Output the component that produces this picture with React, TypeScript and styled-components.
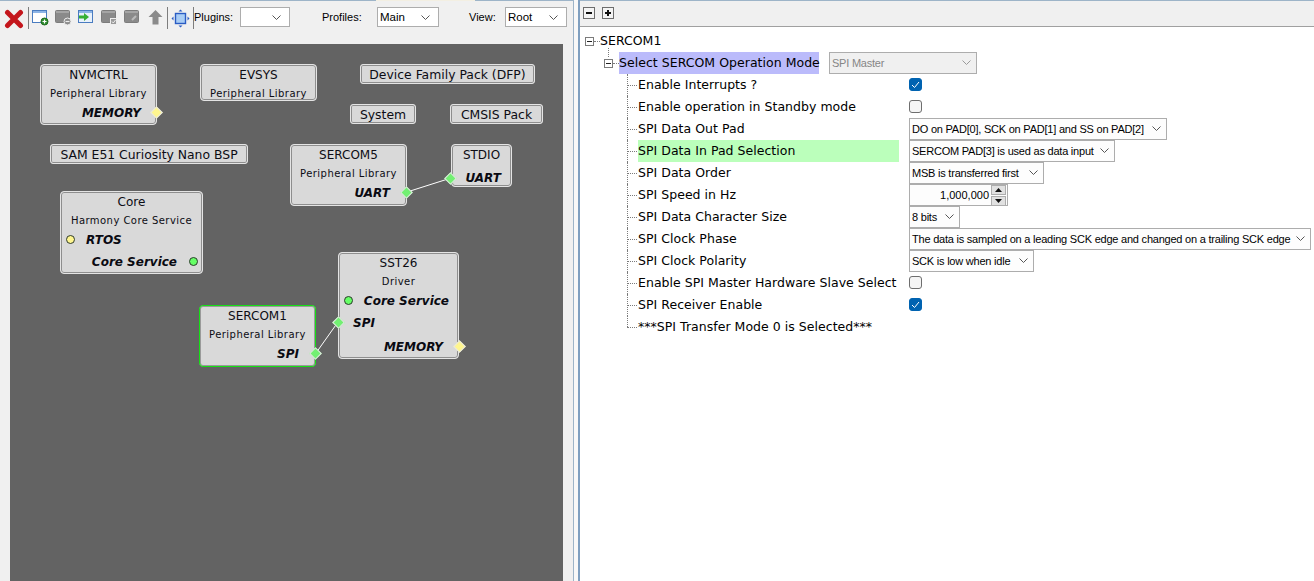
import React from 'react'
import styled, { createGlobalStyle } from 'styled-components'

const GlobalStyle = createGlobalStyle`
  html, body { margin: 0; padding: 0; height: 100%; background: #f0f0f0; overflow: hidden; }
  #root { height: 100%; }
`

const UI_FONT = `"Liberation Sans", Arial, sans-serif`
const TREE_FONT = `"DejaVu Sans", Verdana, sans-serif`

const Window = styled.div`
  width: 1314px;
  height: 581px;
  display: flex;
  font-family: ${UI_FONT};
  color: #000;
`

const LeftPane = styled.div`
  width: 573px;
  height: 581px;
  display: flex;
  flex-direction: column;
`

const TopLine = styled.div`
  height: 1px;
  flex: none;
  background: linear-gradient(
    to right,
    #9db4c8 0,
    #9db4c8 376px,
    #f3efe2 376px,
    #f3efe2 475px,
    #9db4c8 475px
  );
`

const Splitter = styled.div`
  width: 4px;
  border-left: 1px solid #9db4c8;
  border-right: 2px solid #7f9fc0;
  background: #f8f8f8;
`

const RightPane = styled.div`
  flex: 1;
  display: flex;
  flex-direction: column;
  background: #fff;
  border-top: 1px solid #9db4c8;
`

const Toolbar = styled.div`
  height: 35px;
  padding: 6px 0 0 4px;
  box-sizing: border-box;
  display: flex;
  align-items: flex-start;
`

const ToolIcon = styled.svg<{ $gap?: number }>`
  display: block;
  flex: none;
  margin-left: ${p => p.$gap ?? 0}px;
  margin-top: 2px;
`

const ToolSep = styled.div<{ $gap: number }>`
  width: 1px;
  height: 22px;
  background: #7d7d7d;
  margin-left: ${p => p.$gap}px;
  flex: none;
`

const ToolLabel = styled.span<{ $gap: number; $w: number }>`
  font-size: 11px;
  line-height: 20px;
  margin-left: ${p => p.$gap}px;
  width: ${p => p.$w}px;
  flex: none;
`

const ToolCombo = styled.div<{ $w: number; $gap: number }>`
  width: ${p => p.$w}px;
  height: 20px;
  margin-left: ${p => p.$gap}px;
  flex: none;
  box-sizing: border-box;
  border: 1px solid #adadad;
  background: #fff;
  font-size: 11.5px;
  line-height: 18px;
  padding: 0 8px 0 2px;
  display: flex;
  align-items: center;
  justify-content: space-between;
`

const Canvas = styled.div`
  position: relative;
  margin: 8px 10px 0;
  flex: 1;
  background: #636363;
  overflow: hidden;
`

const Wires = styled.svg`
  position: absolute;
  inset: 0;
  pointer-events: none;
  z-index: 2;
`

const Node = styled.div<{ $x: number; $y: number; $w: number; $h: number; $selected?: boolean }>`
  position: absolute;
  left: ${p => p.$x - 10}px;
  top: ${p => p.$y - 44}px;
  width: ${p => p.$w}px;
  height: ${p => p.$h}px;
  box-sizing: border-box;
  padding-top: 1px;
  background: #d9d9d9;
  border-radius: 4px;
  border: 1px solid ${p => (p.$selected ? '#14e014' : '#e4e4e4')};
  box-shadow: inset 0 0 0 1px ${p => (p.$selected ? '#9a9a9a' : '#8e8e8e')};
  text-align: center;
  font-family: ${TREE_FONT};
`

const NodeTitle = styled.div`
  font-size: 12px;
  line-height: 19px;
  margin-bottom: -1px;
  color: #0c0c14;
`

const NodeKind = styled.div`
  font-size: 10px;
  letter-spacing: 0.45px;
  line-height: 20px;
  margin-bottom: -2px;
  color: #0c0c14;
`

const PortLabel = styled.div<{ $pad: number; $left?: boolean; $gap?: number }>`
  font-size: 12px;
  font-weight: bold;
  font-style: italic;
  line-height: 22px;
  color: #0a0a12;
  text-align: ${p => (p.$left ? 'left' : 'right')};
  padding: 0 ${p => (p.$left ? 0 : p.$pad)}px 0 ${p => (p.$left ? p.$pad : 0)}px;
  margin-top: ${p => p.$gap ?? 0}px;
`

const Pack = styled.div<{ $x: number; $y: number; $w: number }>`
  position: absolute;
  left: ${p => p.$x - 10}px;
  top: ${p => p.$y - 44}px;
  width: ${p => p.$w}px;
  height: 20px;
  box-sizing: border-box;
  background: #d9d9d9;
  border-radius: 3px;
  border: 1px solid #e4e4e4;
  box-shadow: inset 0 0 0 1px #8e8e8e;
  text-align: center;
  font-family: ${TREE_FONT};
  font-size: 12.4px;
  line-height: 19px;
  color: #0c0c14;
  white-space: nowrap;
`

const Diamond = styled.div<{ $x: number; $y: number; $color: string }>`
  position: absolute;
  left: ${p => p.$x - 10 - 4.5}px;
  top: ${p => p.$y - 44 - 4.5}px;
  width: 9px;
  height: 9px;
  box-sizing: border-box;
  transform: rotate(45deg);
  background: ${p => p.$color};
  border: 1px solid #e6e6e6;
  z-index: 3;
`

const Dot = styled.div<{ $x: number; $y: number; $color: string }>`
  position: absolute;
  left: ${p => p.$x - 10 - 4.5}px;
  top: ${p => p.$y - 44 - 4.5}px;
  width: 9px;
  height: 9px;
  box-sizing: border-box;
  border-radius: 50%;
  background: ${p => p.$color};
  border: 1px solid #2d3a2d;
  z-index: 3;
`

const TreeBar = styled.div`
  height: 26px;
  flex: none;
  display: flex;
  align-items: flex-start;
  gap: 7px;
  padding: 6px 0 0 3px;
  box-sizing: border-box;
  background: #f0f0f0;
  border-bottom: 1px solid #a0a0a0;
`

const TreeBarButton = styled.div`
  width: 12px;
  height: 12px;
  box-sizing: border-box;
  border: 1px solid #6d6d6d;
  background: #f4f4f4;
  position: relative;
  &::before, &::after {
    content: '';
    position: absolute;
    background: #111;
  }
  &::before { left: 2px; right: 2px; top: 4px; height: 2px; }
  &::after { display: none; }
  &[data-plus='true']::after { display: block; top: 2px; bottom: 2px; left: 4px; width: 2px; }
`

const Tree = styled.div`
  position: relative;
  padding-top: 3px;
  font-family: ${TREE_FONT};
  font-size: 12.5px;
`

const Expander = styled.div`
  width: 9px;
  height: 9px;
  flex: none;
  box-sizing: border-box;
  border: 1px solid #7b7b7b;
  background: #fff;
  position: relative;
  &::before {
    content: '';
    position: absolute;
    left: 1px;
    right: 1px;
    top: 3px;
    height: 1px;
    background: #222;
  }
`

const HLine = styled.div<{ $w: number }>`
  width: ${p => p.$w}px;
  flex: none;
  border-top: 1px dotted #7b7b7b;
`

const RootRow = styled.div`
  height: 22px;
  display: flex;
  align-items: center;
  padding-left: 5px;
  position: relative;
  line-height: 22px;
  letter-spacing: 0.03px;
`

const ModeRow = styled.div`
  height: 22px;
  display: flex;
  align-items: center;
  padding-left: 24px;
  position: relative;
  &::before {
    content: '';
    position: absolute;
    left: 28px;
    top: -4px;
    height: 9px;
    border-left: 1px dotted #7b7b7b;
  }
`

const ModeLabel = styled.div`
  background: #bbbbfb;
  width: 200px;
  height: 22px;
  line-height: 22px;
  flex: none;
  white-space: nowrap;
  letter-spacing: 0.03px;
`

const Rows = styled.div`
  display: flex;
  flex-direction: column;
  margin-left: 47px;
`

const Row = styled.div<{ $last?: boolean }>`
  height: 22px;
  display: grid;
  grid-template-columns: 11px 261px auto;
  column-gap: 0;
  align-items: center;
  position: relative;
  &::before {
    content: '';
    position: absolute;
    left: 0;
    top: 0;
    height: ${p => (p.$last ? '11px' : '22px')};
    border-left: 1px dotted #7b7b7b;
  }
`

const Label = styled.div<{ $active?: boolean }>`
  height: 22px;
  line-height: 22px;
  white-space: nowrap;
  letter-spacing: 0.03px;
  background: ${p => (p.$active ? '#bbffbb' : 'transparent')};
`

const Control = styled.div`
  margin-left: 10px;
  display: flex;
  align-items: center;
`

const Combo = styled.div<{ $w: number; $disabled?: boolean }>`
  width: ${p => p.$w}px;
  height: 22px;
  box-sizing: border-box;
  border: 1px solid #adadad;
  background: ${p => (p.$disabled ? '#f0f0f0' : '#fdfdfd')};
  color: ${p => (p.$disabled ? '#868686' : '#000')};
  font-family: ${UI_FONT};
  font-size: 11px;
  letter-spacing: -0.22px;
  display: flex;
  align-items: center;
  justify-content: space-between;
  padding: 0 5px 1px 2px;
  white-space: nowrap;
`

const Spinner = styled.div`
  width: 99px;
  height: 22px;
  box-sizing: border-box;
  border: 1px solid #adadad;
  background: #fdfdfd;
  font-family: ${UI_FONT};
  font-size: 11px;
  display: flex;
  align-items: center;
  justify-content: flex-end;
  gap: 2px;
  padding-right: 1px;
`

const SpinButtons = styled.div`
  width: 15px;
  display: flex;
  flex-direction: column;
  gap: 1px;
`

const SpinButton = styled.div`
  height: 8px;
  background: #e1e1e1;
  border: 1px solid #adadad;
  display: flex;
  align-items: center;
  justify-content: center;
`

const Check = styled.div<{ $on?: boolean }>`
  width: 13px;
  height: 13px;
  margin-top: -1px;
  box-sizing: border-box;
  border-radius: 3px;
  background: ${p => (p.$on ? '#0063b1' : '#f5f5f5')};
  border: 1px solid ${p => (p.$on ? '#0063b1' : '#6e6e6e')};
  display: flex;
  align-items: center;
  justify-content: center;
`

const Chevron = ({ color = '#555' }: { color?: string }) => (
  <svg width="9" height="5" viewBox="0 0 9 5" fill="none">
    <path d="M0.5 0.5 L4.5 4.5 L8.5 0.5" stroke={color} strokeWidth="1" />
  </svg>
)

const GrayWindow = ({ children, gap }: { children?: React.ReactNode; gap: number }) => (
  <ToolIcon $gap={gap} width="17" height="17" viewBox="0 0 17 17">
    <rect x="0.5" y="1.5" width="14" height="12" rx="1" fill="#8a8a8a" stroke="#7c7c7c" />
    <rect x="1" y="2" width="13" height="2" fill="#a5a5a5" />
    {children}
  </ToolIcon>
)

const ToolbarIcons = () => (
  <>
    <ToolIcon width="20" height="20" viewBox="0 0 20 20">
      <path d="M3.5 3.5 L16.5 16.5 M16.5 3.5 L3.5 16.5" stroke="#c4161c" strokeWidth="5" strokeLinecap="round" />
    </ToolIcon>
    <ToolSep $gap={4} />
    <ToolIcon $gap={3} width="17" height="17" viewBox="0 0 17 17">
      <rect x="0.5" y="1.5" width="14" height="12" fill="#fff" stroke="#4a7cc0" />
      <rect x="1" y="2" width="13" height="2" fill="#8db4e6" />
      <circle cx="12.5" cy="12.5" r="3.5" fill="#2e8b2e" stroke="#1d6b1d" />
      <path d="M10.5 12.5 H14.5 M12.5 10.5 V14.5" stroke="#fff" strokeWidth="1.2" />
    </ToolIcon>
    <GrayWindow gap={6}>
      <circle cx="12.5" cy="12.5" r="3.5" fill="#8a8a8a" stroke="#eee" />
      <path d="M10.5 12.5 H14.5" stroke="#eee" strokeWidth="1.2" />
    </GrayWindow>
    <ToolIcon $gap={6} width="17" height="17" viewBox="0 0 17 17">
      <rect x="0.5" y="1.5" width="14" height="12" fill="#e8f1fb" stroke="#4a7cc0" />
      <rect x="1" y="2" width="13" height="2" fill="#8db4e6" />
      <path d="M1 6.5 H6 V4 L11 8 L6 12 V9.5 H1 Z" fill="#35b035" />
    </ToolIcon>
    <GrayWindow gap={6}>
      <rect x="9.5" y="9.5" width="6" height="6" fill="#9a9a9a" stroke="#eee" />
      <path d="M11 12.5 L12.3 14 L14.5 11" stroke="#eee" fill="none" />
    </GrayWindow>
    <GrayWindow gap={6}>
      <path d="M8 11 L12 7" stroke="#bbb" strokeWidth="2" />
    </GrayWindow>
    <ToolIcon $gap={6} width="17" height="17" viewBox="0 0 17 17">
      <path d="M8.5 1 L15.5 8 H11.5 V15.5 H5.5 V8 H1.5 Z" fill="#8a8a8a" />
    </ToolIcon>
    <ToolSep $gap={3} />
    <ToolIcon $gap={3} width="19" height="19" viewBox="0 0 19 19">
      <rect x="4.5" y="4.5" width="10" height="10" fill="#a9cdf5" stroke="#2a5cc4" strokeWidth="1.4" />
      <path d="M9.5 0.5 L7.5 2.5 H11.5 Z M9.5 18.5 L7.5 16.5 H11.5 Z M0.5 9.5 L2.5 7.5 V11.5 Z M18.5 9.5 L16.5 7.5 V11.5 Z" fill="#2a5cc4" />
    </ToolIcon>
    <ToolSep $gap={3} />
  </>
)

const CONFIG_ROWS: { label: string; active?: boolean; check?: boolean; combo?: [string, number]; spin?: string }[] = [
  { label: 'Enable Interrupts ?', check: true },
  { label: 'Enable operation in Standby mode', check: false },
  { label: 'SPI Data Out Pad', combo: ['DO on PAD[0], SCK on PAD[1] and SS on PAD[2]', 258] },
  { label: 'SPI Data In Pad Selection', active: true, combo: ['SERCOM PAD[3] is used as data input', 206] },
  { label: 'SPI Data Order', combo: ['MSB is transferred first', 135] },
  { label: 'SPI Speed in Hz', spin: '1,000,000' },
  { label: 'SPI Data Character Size', combo: ['8 bits', 51] },
  { label: 'SPI Clock Phase', combo: ['The data is sampled on a leading SCK edge and changed on a trailing SCK edge', 402] },
  { label: 'SPI Clock Polarity', combo: ['SCK is low when idle', 125] },
  { label: 'Enable SPI Master Hardware Slave Select', check: false },
  { label: 'SPI Receiver Enable', check: true },
  { label: '***SPI Transfer Mode 0 is Selected***' },
]

const App = () => (
  <Window>
    <GlobalStyle />
    <LeftPane>
      <TopLine />
      <Toolbar>
        <ToolbarIcons />
        <ToolLabel $gap={0} $w={46}>Plugins:</ToolLabel>
        <ToolCombo $w={50} $gap={0}>
          <span />
          <Chevron />
        </ToolCombo>
        <ToolLabel $gap={32} $w={55}>Profiles:</ToolLabel>
        <ToolCombo $w={62} $gap={0}>
          Main
          <Chevron />
        </ToolCombo>
        <ToolLabel $gap={30} $w={36}>View:</ToolLabel>
        <ToolCombo $w={62} $gap={0}>
          Root
          <Chevron />
        </ToolCombo>
      </Toolbar>
      <Canvas>
        <Wires width="553" height="537">
          <line x1={397} y1={148} x2={441} y2={134} stroke="#fff" strokeWidth="1" />
          <line x1={306} y1={309} x2={328} y2={278} stroke="#fff" strokeWidth="1" />
        </Wires>

        <Node $x={40} $y={64} $w={117} $h={61}>
          <NodeTitle>NVMCTRL</NodeTitle>
          <NodeKind>Peripheral Library</NodeKind>
          <PortLabel $pad={15}>MEMORY</PortLabel>
        </Node>
        <Node $x={200} $y={64} $w={117} $h={37}>
          <NodeTitle>EVSYS</NodeTitle>
          <NodeKind>Peripheral Library</NodeKind>
        </Node>
        <Pack $x={360} $y={64} $w={175}>Device Family Pack (DFP)</Pack>
        <Pack $x={350} $y={104} $w={66}>System</Pack>
        <Pack $x={450} $y={104} $w={93}>CMSIS Pack</Pack>
        <Pack $x={50} $y={144} $w={198}>SAM E51 Curiosity Nano BSP</Pack>

        <Node $x={60} $y={191} $w={143} $h={83}>
          <NodeTitle>Core</NodeTitle>
          <NodeKind>Harmony Core Service</NodeKind>
          <PortLabel $pad={25} $left>RTOS</PortLabel>
          <PortLabel $pad={25}>Core Service</PortLabel>
        </Node>

        <Node $x={290} $y={144} $w={117} $h={62}>
          <NodeTitle>SERCOM5</NodeTitle>
          <NodeKind>Peripheral Library</NodeKind>
          <PortLabel $pad={16}>UART</PortLabel>
        </Node>
        <Node $x={451} $y={144} $w={61} $h={43}>
          <NodeTitle>STDIO</NodeTitle>
          <PortLabel $pad={10} $gap={3}>UART</PortLabel>
        </Node>
        <Node $x={338} $y={252} $w={121} $h={107}>
          <NodeTitle>SST26</NodeTitle>
          <NodeKind>Driver</NodeKind>
          <PortLabel $pad={9}>Core Service</PortLabel>
          <PortLabel $pad={14} $left>SPI</PortLabel>
          <PortLabel $pad={15} $gap={2}>MEMORY</PortLabel>
        </Node>
        <Node $x={199} $y={305} $w={117} $h={62} $selected>
          <NodeTitle>SERCOM1</NodeTitle>
          <NodeKind>Peripheral Library</NodeKind>
          <PortLabel $pad={16}>SPI</PortLabel>
        </Node>

        <Diamond $x={156.5} $y={112.5} $color="#fff68f" />
        <Diamond $x={406.5} $y={192} $color="#72f072" />
        <Diamond $x={450.5} $y={178} $color="#72f072" />
        <Diamond $x={338} $y={322} $color="#72f072" />
        <Diamond $x={315.5} $y={353} $color="#72f072" />
        <Diamond $x={459.5} $y={346.5} $color="#fff68f" />
        <Dot $x={70.5} $y={239.5} $color="#fff68f" />
        <Dot $x={193} $y={261} $color="#66ff66" />
        <Dot $x={348.5} $y={300.5} $color="#66ff66" />
      </Canvas>
    </LeftPane>
    <Splitter />
    <RightPane>
      <TreeBar>
        <TreeBarButton />
        <TreeBarButton data-plus="true" />
      </TreeBar>
      <Tree>
        <RootRow>
          <Expander />
          <HLine $w={6} />
          SERCOM1
        </RootRow>
        <ModeRow>
          <Expander />
          <HLine $w={6} />
          <ModeLabel>Select SERCOM Operation Mode</ModeLabel>
          <Control>
            <Combo $w={148} $disabled>
              SPI Master
              <Chevron color="#9a9a9a" />
            </Combo>
          </Control>
        </ModeRow>
        <Rows>
          {CONFIG_ROWS.map((row, i) => (
            <Row key={row.label} $last={i === CONFIG_ROWS.length - 1}>
              <HLine $w={10} />
              <Label $active={row.active}>{row.label}</Label>
              <Control>
                {row.check !== undefined && (
                  <Check $on={row.check}>
                    {row.check && (
                      <svg width="9" height="8" viewBox="0 0 9 8" fill="none">
                        <path d="M1 4 L3.5 6.5 L8 1" stroke="#fff" strokeWidth="1" />
                      </svg>
                    )}
                  </Check>
                )}
                {row.combo && (
                  <Combo $w={row.combo[1]}>
                    {row.combo[0]}
                    <Chevron />
                  </Combo>
                )}
                {row.spin && (
                  <Spinner>
                    {row.spin}
                    <SpinButtons>
                      <SpinButton>
                        <svg width="7" height="4" viewBox="0 0 7 4"><path d="M3.5 0 L7 4 H0 Z" fill="#111" /></svg>
                      </SpinButton>
                      <SpinButton>
                        <svg width="7" height="4" viewBox="0 0 7 4"><path d="M0 0 H7 L3.5 4 Z" fill="#111" /></svg>
                      </SpinButton>
                    </SpinButtons>
                  </Spinner>
                )}
              </Control>
            </Row>
          ))}
        </Rows>
      </Tree>
    </RightPane>
  </Window>
)

export default App
